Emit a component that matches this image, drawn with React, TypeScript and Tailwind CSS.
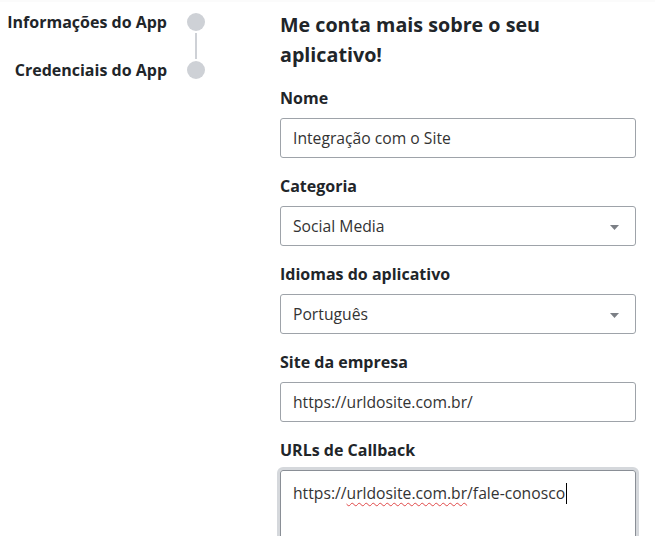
import React from "react";

function Field({ label, children }: { label: string; children: React.ReactNode }) {
  return (
    <div className="flex flex-col">
      <div className="h-5 mb-[10px] text-[16px] leading-5 font-bold text-[#212529]">{label}</div>
      {children}
    </div>
  );
}

function TextBox({ value }: { value: string }) {
  return (
    <div className="h-10 w-full border border-[#9ea3a9] rounded-[3px] px-3 pt-px flex items-center text-[15.7px] text-[#333]">
      {value}
    </div>
  );
}

function SelectBox({ value }: { value: string }) {
  return (
    <div className="h-10 w-full border border-[#9ea3a9] rounded-[3px] pl-3 pr-4 pt-px flex items-center justify-between text-[15.7px] text-[#333]">
      <span>{value}</span>
      <svg width="9" height="5" viewBox="0 0 9 5" className="mt-[2px]">
        <path d="M0 0 L9 0 L4.5 5 Z" fill="#7b7f85" />
      </svg>
    </div>
  );
}

export default function App() {
  return (
    <div
      className="w-[655px] h-[536px] overflow-hidden bg-white flex border-t-2 border-[#fbfbfb]"
      style={{ fontFamily: '"Open Sans", "Noto Sans", sans-serif' }}
    >
      <div className="w-[205px] flex flex-col items-end pt-[11px] shrink-0">
        <div className="flex items-center gap-5 h-[18px]">
          <span className="text-[16px] font-bold text-[#212529] leading-5">Informações do App</span>
          <span className="w-[18px] h-[18px] rounded-full bg-[#ced1d6]" />
        </div>
        <div className="w-[18px] h-[30px] flex justify-center">
          <div className="w-[2px] h-[26px] mt-[2px] bg-[#ced1d6]" />
        </div>
        <div className="flex items-center gap-5 h-[18px]">
          <span className="text-[16px] font-bold text-[#212529] leading-5">Credenciais do App</span>
          <span className="w-[18px] h-[18px] rounded-full bg-[#ced1d6]" />
        </div>
      </div>
      <div className="ml-[75px] w-[356px] flex flex-col pt-[8px] gap-[18px]">
        <h1 className="text-[19.7px] leading-[30px] font-bold text-[#212529]">
          Me conta mais sobre o seu aplicativo!
        </h1>
        <Field label="Nome">
          <TextBox value="Integração com o Site" />
        </Field>
        <Field label="Categoria">
          <SelectBox value="Social Media" />
        </Field>
        <Field label="Idiomas do aplicativo">
          <SelectBox value="Português" />
        </Field>
        <Field label="Site da empresa">
          <TextBox value="https://urldosite.com.br/" />
        </Field>
        <Field label="URLs de Callback">
          <div className="h-[110px] w-full border border-[#8a8f96] rounded-[3px] px-3 pt-[10px] text-[15.7px] leading-6 text-[#333] ring-[3px] ring-[#d5d8dc]">
            https://
            <span className="underline decoration-wavy decoration-[#e04848] decoration-1 underline-offset-[3px]">
              urldosite.com.br
            </span>
            /fale-conosco
            <span className="inline-block w-px h-[21px] bg-black align-middle ml-px -mt-[3px]" />
          </div>
        </Field>
      </div>
    </div>
  );
}
